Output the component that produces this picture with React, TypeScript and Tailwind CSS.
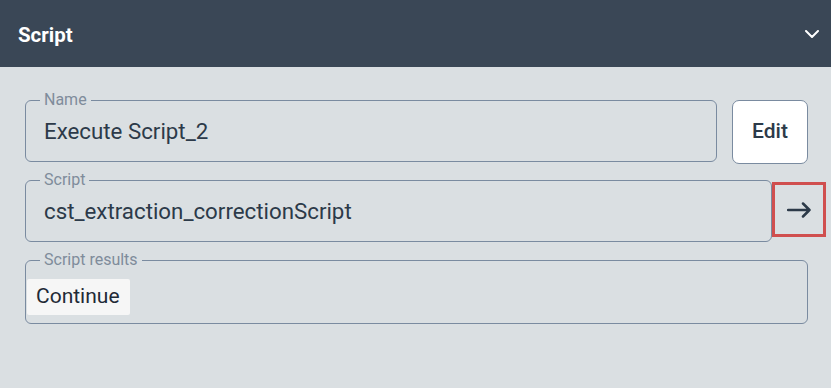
import React from 'react';

const font = { fontFamily: 'Roboto, "Liberation Sans", sans-serif' };

function Field({ label, children, className = '' }: { label: string; children: React.ReactNode; className?: string }) {
  return (
    <fieldset className={`min-w-0 flex-1 rounded-[6px] border border-[#7a8ba0] ${className}`}>
      <legend className="ml-[14px] px-1 text-[16px] leading-[18px] text-[#7f8c9b]">{label}</legend>
      {children}
    </fieldset>
  );
}

export default function App() {
  return (
    <div className="h-[388px] w-[831px] overflow-hidden bg-[#dadfe2]" style={font}>
      {/* Header */}
      <div className="flex h-[67px] items-center justify-between bg-[#3a4756] pl-[18px] pr-[12px]">
        <span className="mt-[3px] text-[20.5px] font-bold text-white">Script</span>
        <svg width="14" height="8" viewBox="0 0 14 8" fill="none">
          <polyline points="1,1 7,7 13,1" stroke="white" strokeWidth="2" strokeLinecap="round" strokeLinejoin="round" />
        </svg>
      </div>

      <div className="flex flex-col gap-[9px] pl-[25px] pr-[23px] pt-[24px]">
        {/* Name */}
        <div className="flex items-end gap-[15px]">
          <Field label="Name">
            <div className="pb-[16px] pl-[18px] pt-[8px] text-[22.3px] leading-[28px] text-[#2c3a49]">Execute Script_2</div>
          </Field>
          <button className="mb-[-2px] h-[64px] w-[76px] rounded-[7px] border border-[#7a8ba0] bg-white text-[21px] font-medium text-[#2c3a49]">
            Edit
          </button>
        </div>

        {/* Script */}
        <div className="-mr-[18px] flex items-end">
          <Field label="Script">
            <div className="pb-[16px] pl-[18px] pt-[8px] text-[22.3px] leading-[28px] text-[#2c3a49]">
              cst_extraction_correctionScript
            </div>
          </Field>
          <button className="mb-[5px] flex h-[55px] w-[54px] items-center justify-center border-[3px] border-[#d04f4f]">
            <svg width="24" height="16" viewBox="0 0 24 16" fill="none">
              <path d="M1 8H22.5M16 1.5L22.5 8L16 14.5" stroke="#2c3a49" strokeWidth="2.5" strokeLinecap="round" strokeLinejoin="round" />
            </svg>
          </button>
        </div>

        {/* Script results */}
        <Field label="Script results">
          <div className="pb-[8px] pt-[10px]">
            <div className="ml-[1px] inline-flex h-[36px] items-center rounded-[2px] bg-[#f6f6f6] pl-[9px] pr-[10px] text-[21px] text-[#1f2a36]">
              Continue
            </div>
          </div>
        </Field>
      </div>
    </div>
  );
}
